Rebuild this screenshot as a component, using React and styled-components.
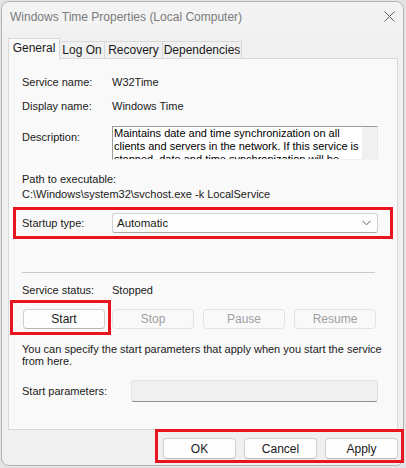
import styled, { createGlobalStyle } from 'styled-components';

const GlobalStyle = createGlobalStyle`
  html, body {
    margin: 0;
    background: #e3e4e6;
  }
  body {
    font-family: "Liberation Sans", Arial, sans-serif;
    font-size: 11px;
    color: #1a1a1a;
  }
  * {
    box-sizing: border-box;
  }
`;

const Window = styled.div`
  width: 403px;
  height: 465px;
  margin: 1px 0 0 1px;
  border: 1px solid #b4b4b4;
  border-radius: 8px;
  background: #f0f0f0;
  display: flex;
  flex-direction: column;
`;

const TitleBar = styled.div`
  height: 29px;
  display: flex;
  align-items: center;
  justify-content: space-between;
  padding: 0 8px 0 8px;
  background: #f3f3f3;
  border-radius: 8px 8px 0 0;
  color: #7a7a7a;
  font-size: 12px;
`;

const CloseIcon = styled.svg`
  width: 11px;
  height: 11px;
`;

const TabStrip = styled.div`
  display: flex;
  align-items: flex-end;
  height: 20px;
  margin: 7px 0 0 6px;
`;

const Tab = styled.div`
  width: ${({ $w }) => $w}px;
  height: ${({ $active }) => ($active ? 21 : 17)}px;
  margin-bottom: ${({ $active }) => ($active ? -1 : 0)}px;
  margin-left: ${({ $first }) => ($first ? 0 : -1)}px;
  position: relative;
  z-index: ${({ $active }) => ($active ? 2 : 1)};
  display: flex;
  align-items: center;
  justify-content: center;
  padding-bottom: ${({ $active }) => ($active ? 2 : 0)}px;
  border: 1px solid #d9d9d9;
  border-bottom: none;
  background: ${({ $active }) => ($active ? '#f9f9f9' : '#f0f0f0')};
  font-size: 12px;
`;

const Panel = styled.div`
  height: 372px;
  margin: 0 5px 0 6px;
  padding: 15px 19px 0 13px;
  border: 1px solid #d9d9d9;
  background: #f9f9f9;
  display: flex;
  flex-direction: column;
`;

const Row = styled.div`
  display: flex;
  align-items: ${({ $top }) => ($top ? 'flex-start' : 'center')};
  margin-top: ${({ $mt }) => $mt || 0}px;
  line-height: 16px;
`;

const Label = styled.div`
  width: ${({ $w }) => $w || 90}px;
  flex-shrink: 0;
  padding-top: ${({ $pt }) => $pt || 0}px;
  line-height: 16px;
`;

const DescBox = styled.div`
  flex: 1;
  height: 34px;
  display: flex;
  border-top: 1px solid #9c9c9c;
  border-left: 1px solid #9c9c9c;
  border-right: 1px solid #e6e6e6;
  border-bottom: 1px solid #f0f0f0;
  background: #fff;
  overflow: hidden;
`;

const DescText = styled.div`
  flex: 1;
  padding: 0 2px 0 1px;
  font-size: 11px;
  line-height: 13px;
  color: #000;
`;

const ScrollTrack = styled.div`
  width: 15px;
  background: #f0f0f0;
`;

const PathLabel = styled.div`
  margin-top: ${({ $mt }) => $mt || 0}px;
  line-height: 15px;
`;

const Highlight = styled.div`
  display: flex;
  align-items: ${({ $align }) => $align || 'center'};
  border: 3px solid #e8141f;
  padding: ${({ $pad }) => $pad};
  margin: ${({ $margin }) => $margin};
  gap: ${({ $gap }) => $gap || 0}px;
`;

const Combo = styled.div`
  flex: 1;
  height: 20px;
  display: flex;
  align-items: center;
  justify-content: space-between;
  padding: 0 6px 0 4px;
  border: 1px solid #d2d2d2;
  border-bottom-color: #a8a8a8;
  border-radius: 3px;
  background: #fdfdfd;
  font-size: 11.5px;
`;

const Separator = styled.div`
  height: 1px;
  margin: 33px 3px 0 0;
  background: #c9c9c9;
`;

const ButtonRow = styled.div`
  display: flex;
  align-items: flex-start;
  margin: 2px 0 0 -12px;
`;

const Button = styled.div`
  width: ${({ $w }) => $w || 82}px;
  height: ${({ $h }) => $h || 20}px;
  margin: ${({ $margin }) => $margin || 0};
  display: flex;
  align-items: center;
  justify-content: center;
  border: 1px solid ${({ $disabled }) => ($disabled ? '#e3e3e3' : '#d0d0d0')};
  border-bottom-color: ${({ $disabled }) => ($disabled ? '#e3e3e3' : '#b9b9b9')};
  border-radius: 4px;
  background: ${({ $disabled }) => ($disabled ? '#f9f9f9' : '#fdfdfd')};
  color: ${({ $disabled }) => ($disabled ? '#a0a0a0' : '#1a1a1a')};
  font-size: 12px;
`;

const Note = styled.p`
  margin: 8px 0 0;
  line-height: 12px;
  font-size: 11px;
  white-space: nowrap;
`;

const Input = styled.div`
  flex: 1;
  height: 22px;
  border: 1px solid #e2e2e2;
  border-bottom-color: #8f8f8f;
  border-radius: 3px;
  background: #f0f0f0;
`;

const Footer = styled.div`
  display: flex;
  justify-content: flex-end;
  margin: -1px -1px 0 0;
`;

const App = () => (
  <>
    <GlobalStyle />
    <Window>
      <TitleBar>
        <span>Windows Time Properties (Local Computer)</span>
        <CloseIcon viewBox="0 0 11 11">
          <path d="M0.5 0.5 L10.5 10.5 M10.5 0.5 L0.5 10.5" stroke="#5f5f5f" strokeWidth="1" fill="none" />
        </CloseIcon>
      </TitleBar>
      <TabStrip>
        <Tab $w={52} $active $first>General</Tab>
        <Tab $w={46}>Log On</Tab>
        <Tab $w={59}>Recovery</Tab>
        <Tab $w={80}>Dependencies</Tab>
      </TabStrip>
      <Panel>
        <Row>
          <Label>Service name:</Label>
          <span>W32Time</span>
        </Row>
        <Row $mt={8}>
          <Label>Display name:</Label>
          <span>Windows Time</span>
        </Row>
        <Row $mt={12} $top>
          <Label $pt={3}>Description:</Label>
          <DescBox>
            <DescText>
              Maintains date and time synchronization on all clients and servers in the network. If this
              service is stopped, date and time synchronization will be unavailable.
            </DescText>
            <ScrollTrack />
          </DescBox>
        </Row>
        <PathLabel $mt={12}>Path to executable:</PathLabel>
        <PathLabel>C:\Windows\system32\svchost.exe -k LocalService</PathLabel>
        <Highlight $pad="3px 12px 3px 6px" $margin="5px -15px 0 -9px">
          <Label>Startup type:</Label>
          <Combo>
            <span>Automatic</span>
            <svg width="9" height="6" viewBox="0 0 9 6">
              <path d="M0.5 0.8 L4.5 4.8 L8.5 0.8" stroke="#5a5a5a" strokeWidth="1" fill="none" />
            </svg>
          </Combo>
        </Highlight>
        <Separator />
        <Row $mt={9}>
          <Label>Service status:</Label>
          <span>Stopped</span>
        </Row>
        <ButtonRow>
          <Highlight $pad="6px 3px 3px 10px" $margin="0">
            <Button>Start</Button>
          </Highlight>
          <Button $disabled $margin="9px 0 0 1px">Stop</Button>
          <Button $disabled $margin="9px 0 0 9px">Pause</Button>
          <Button $disabled $margin="9px 0 0 9px">Resume</Button>
        </ButtonRow>
        <Note>
          You can specify the start parameters that apply when you start the service
          <br />
          from here.
        </Note>
        <Row $mt={13}>
          <Label $w={109}>Start parameters:</Label>
          <Input />
        </Row>
      </Panel>
      <Footer>
        <Highlight $pad="6px 3px 1px 5px" $margin="0" $align="flex-start" $gap={8}>
          <Button $w={73} $h={21}>OK</Button>
          <Button $w={73} $h={21}>Cancel</Button>
          <Button $w={73} $h={21}>Apply</Button>
        </Highlight>
      </Footer>
    </Window>
  </>
);

export default App;
